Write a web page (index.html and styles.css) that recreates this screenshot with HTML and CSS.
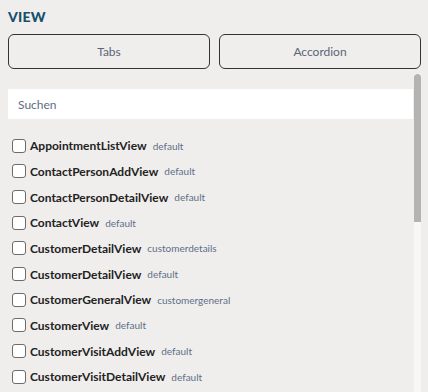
FILE: index.html
```html
<!DOCTYPE html>
<html lang="de">
<head>
    <meta charset="UTF-8">
    <meta name="viewport" content="width=device-width, initial-scale=1.0">
    <title>View</title>
    <link rel="stylesheet" href="styles.css">
</head>
<body>
    <section class="panel">
        <h2 class="panel-title">VIEW</h2>
        <div class="mode-buttons">
            <button class="mode-btn">Tabs</button>
            <button class="mode-btn">Accordion</button>
        </div>

        <div class="view-list">
            <div class="list-body">
                <input class="search" type="text" placeholder="Suchen">
                <ul class="views">
                    <li><label><span class="box"></span><strong>AppointmentListView</strong><span class="tag">default</span></label></li>
                    <li><label><span class="box"></span><strong>ContactPersonAddView</strong><span class="tag">default</span></label></li>
                    <li><label><span class="box"></span><strong>ContactPersonDetailView</strong><span class="tag">default</span></label></li>
                    <li><label><span class="box"></span><strong>ContactView</strong><span class="tag">default</span></label></li>
                    <li><label><span class="box"></span><strong>CustomerDetailView</strong><span class="tag">customerdetails</span></label></li>
                    <li><label><span class="box"></span><strong>CustomerDetailView</strong><span class="tag">default</span></label></li>
                    <li><label><span class="box"></span><strong>CustomerGeneralView</strong><span class="tag">customergeneral</span></label></li>
                    <li><label><span class="box"></span><strong>CustomerView</strong><span class="tag">default</span></label></li>
                    <li><label><span class="box"></span><strong>CustomerVisitAddView</strong><span class="tag">default</span></label></li>
                    <li><label><span class="box"></span><strong>CustomerVisitDetailView</strong><span class="tag">default</span></label></li>
                </ul>
            </div>
            <div class="scrollbar"><div class="thumb"></div></div>
        </div>
    </section>
</body>
</html>
```

FILE: styles.css
```css
body {
    background-color: #f0eeec;
    margin: 0;
    padding: 0 7px 0 8px;
    font-family: "Lato", "Open Sans", sans-serif;
    overflow: hidden;
}

.panel-title {
    color: #17506b;
    font-size: 14px;
    font-weight: 900;
    margin: 0;
    padding-top: 8px;
    height: 26px;
    line-height: 18px;
    letter-spacing: 0.2px;
}

.mode-buttons {
    display: flex;
    gap: 9px;
}

.mode-btn {
    flex: 1;
    height: 35px;
    background-color: transparent;
    border: 1px solid #333;
    border-radius: 6px;
    font-family: inherit;
    font-size: 12px;
    color: #5b6577;
    cursor: pointer;
}

/* list with its own (drawn) scrollbar */
.view-list {
    margin-top: 5px;
    height: 318px;
    display: flex;
}

.list-body {
    flex: 1;
    overflow: hidden;
    padding-top: 15px;
}

.scrollbar {
    width: 7px;
    background-color: #f7f7f7;
}

.thumb {
    height: 148px;
    background-color: #b3b3b3;
    border-radius: 4px 4px 0 0;
}

.search {
    display: block;
    width: calc(100% - 1px);
    height: 30px;
    box-sizing: border-box;
    border: none;
    outline: none;
    background-color: #fff;
    padding: 0 10px;
    font-family: inherit;
    font-size: 12px;
}

.search::placeholder {
    color: #5f6d82;
}

.views {
    list-style: none;
    margin: 0;
    padding: 14px 0 0 4px;
}

.views li {
    height: 25.67px;
    display: flex;
    align-items: center;
}

.views label {
    display: flex;
    align-items: center;
    cursor: pointer;
}

.box {
    width: 14px;
    height: 14px;
    box-sizing: border-box;
    border: 1px solid #6b6b6b;
    border-radius: 3px;
    background-color: #fff;
    margin-right: 4px;
}

.views strong {
    font-size: 12px;
    color: #222;
}

.tag {
    font-size: 10px;
    color: #5d6f88;
    margin-left: 6px;
}
```
